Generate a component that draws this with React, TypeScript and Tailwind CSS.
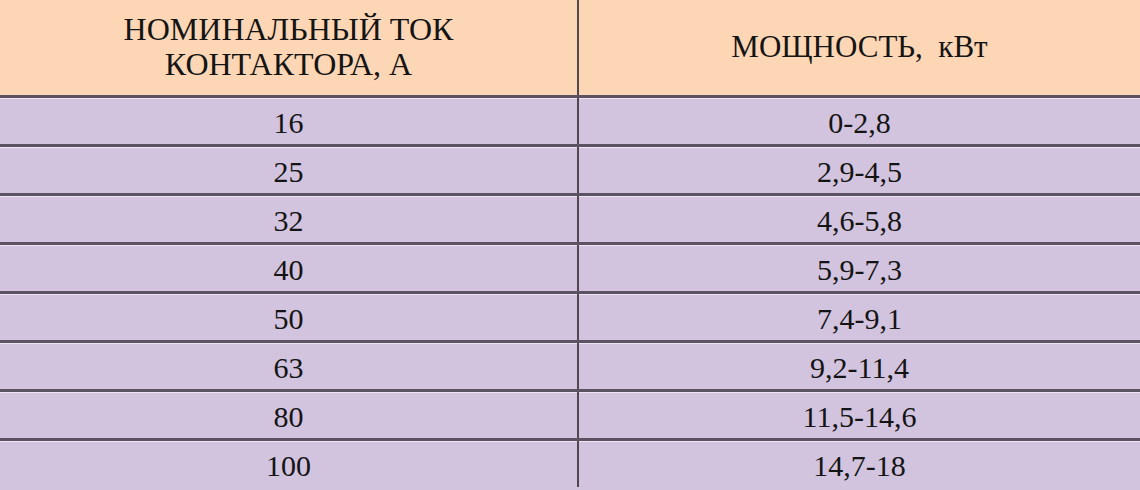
import React from "react";

const rows: [string, string][] = [
  ["16", "0-2,8"],
  ["25", "2,9-4,5"],
  ["32", "4,6-5,8"],
  ["40", "5,9-7,3"],
  ["50", "7,4-9,1"],
  ["63", "9,2-11,4"],
  ["80", "11,5-14,6"],
  ["100", "14,7-18"],
];

export default function App() {
  return (
    <div className="w-[1140px] h-[490px] overflow-hidden bg-[#d2c3de] text-[#141414] font-['Liberation_Serif',serif]">
      <div className="flex h-[95px] bg-[#fdd6b5]">
        <div className="w-[579px] border-r-2 border-[#4f4850] flex items-center justify-center pb-[2px]">
          <p className="font-['Liberation_Serif',serif] text-center text-[32px] leading-[35px]">
            НОМИНАЛЬНЫЙ ТОК
            <br />
            КОНТАКТОРА, А
          </p>
        </div>
        <div className="flex-1 flex items-center justify-center pb-[2px]">
          <p className="font-['Liberation_Serif',serif] text-[31px] leading-[35px]">МОЩНОСТЬ,&nbsp; кВт</p>
        </div>
      </div>
      {rows.map(([a, b]) => (
        <div
          key={a}
          className="flex h-[49px] border-t-[3px] border-[#5b5362] shadow-[inset_0_1px_0_#eee4f4]"
        >
          <div className="w-[579px] border-r-2 border-[#4f4850] flex items-center justify-center pt-[2px]">
            <span className="font-['Liberation_Serif',serif] text-[30px]">{a}</span>
          </div>
          <div className="flex-1 flex items-center justify-center pt-[2px]">
            <span className="font-['Liberation_Serif',serif] text-[30px]">{b}</span>
          </div>
        </div>
      ))}
    </div>
  );
}
